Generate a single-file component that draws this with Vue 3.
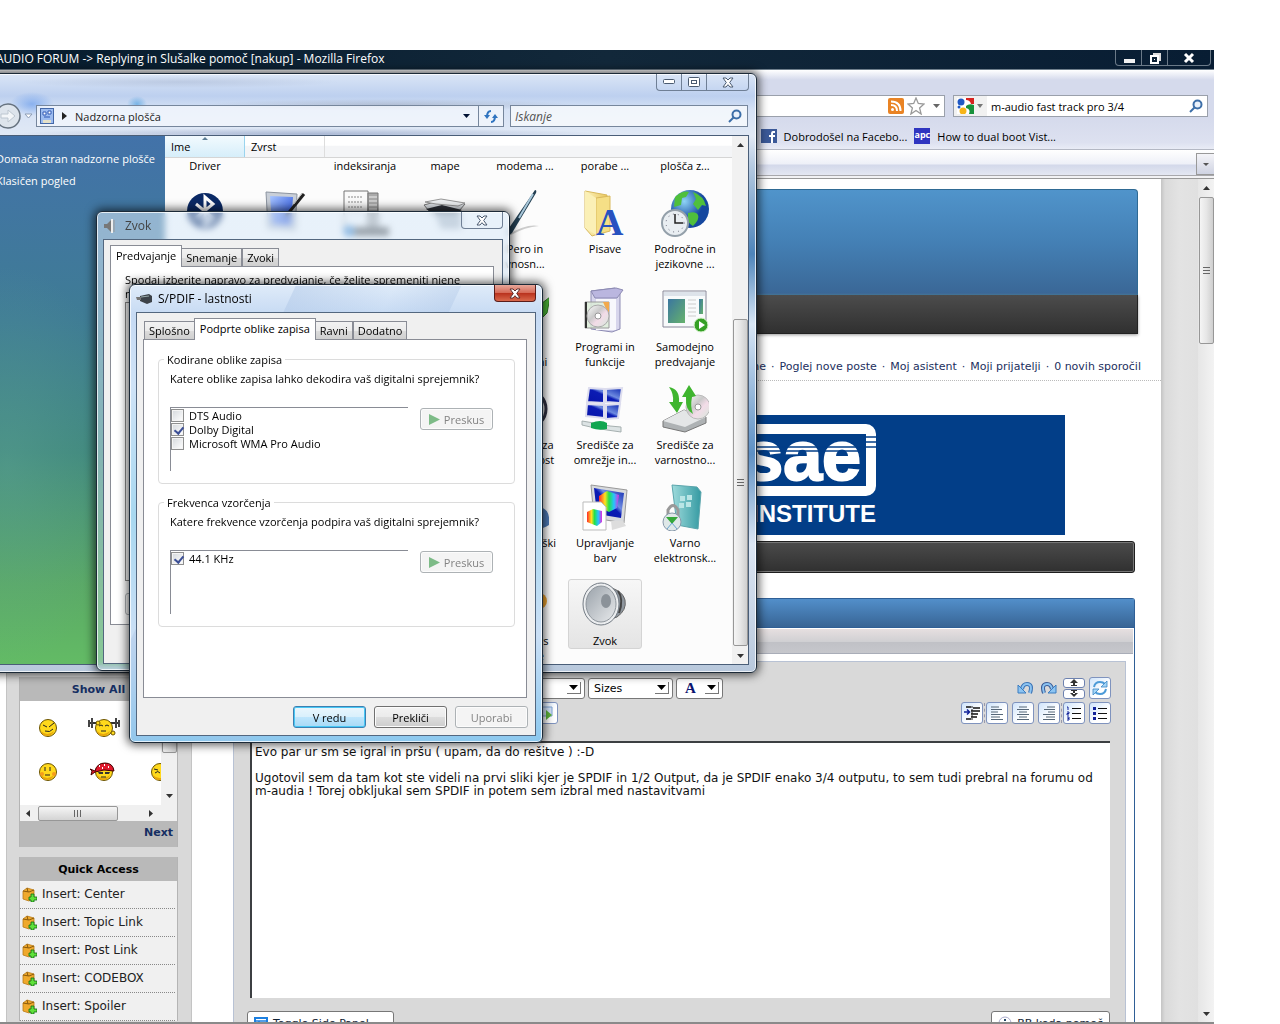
<script setup>
import { ref } from 'vue'

const searchText = ref('m-audio fast track pro 3/4')
const post = ref(`Evo par ur sm se igral in pršu ( upam, da do rešitve ) :-D

Ugotovil sem da tam kot ste videli na prvi sliki kjer je SPDIF in 1/2 Output, da je SPDIF enako 3/4 outputu, to sem tudi prebral na forumu od
m-audia ! Torej obkljukal sem SPDIF in potem sem izbral med nastavitvami`)

const formats = ref([
  { name: 'DTS Audio', on: false },
  { name: 'Dolby Digital', on: true },
  { name: 'Microsoft WMA Pro Audio', on: false }
])
const rates = ref([{ name: '44.1 KHz', on: true }])

const userLinks = ['Poglej nove poste', 'Moj asistent', 'Moji prijatelji', '0 novih sporočil']
const quick = ['Center', 'Topic Link', 'Post Link', 'CODEBOX', 'Spoiler']
const firstRow = ['Driver', '', 'indeksiranja', 'mape', 'modema ...', 'porabe ...', 'plošča z...']

// control panel icons, 48x48
const art = {
  bluetooth: '<circle cx="24" cy="22" r="18" fill="#0b2a66"/><path d="M15 15l17 14-8 7V8l8 7-17 14" fill="none" stroke="#fff" stroke-width="3"/>',
  tablet: '<path d="M5 3l31 2-2 36-27-2z" fill="#c9cfd8" stroke="#8c94a0"/><path d="M9 7l23 1-2 28-19-1z" fill="url(#gScreen)"/><path d="M43 5L25 27" stroke="#222" stroke-width="3"/><path d="M41 4L33 15" stroke="#bbb"/>',
  index: '<path d="M3 2h24v40H3z" fill="#fafafa" stroke="#777"/><path d="M27 4h10v36H27z" fill="#aaa" stroke="#777"/><path d="M7 8h15M7 13h15M7 18h15M7 23h15" stroke="#888" stroke-dasharray="2 1"/><path d="M28 8h8M28 12h8M28 16h8M28 20h8" stroke="#eee"/><path d="M4 38h46v9H4z" fill="#555"/><circle cx="8" cy="42" r="6" fill="#4b8fd0"/>',
  printer: '<path d="M3 16l18-5 23 4-6 7H8z" fill="#dfe3e8" stroke="#777"/><path d="M5 20l16-4 20 5-6 3H12z" fill="#2e3239"/><path d="M4 13l16-3 24 4-7 3-22-2z" fill="#f0f2f4" stroke="#999"/><path d="M14 24h26v16H20z" fill="#b5bdc6"/>',
  pen: '<path d="M6 46q20-12 32-9-14 1-28 9z" fill="#ccc"/><path d="M34 1q2 0 1 3L11 44l-4 3 1-8z" fill="#233f52"/><path d="M32 5L18 29" stroke="#a9c8da" stroke-width="2"/>',
  fonts: '<path d="M4 2l22 4v36L11 47 4 39z" fill="url(#gFolder)" stroke="#d9b95c"/><path d="M15 9l14-2v35l-14 4z" fill="#f5df86" stroke="#d9b95c"/><path d="M4 2l11 7v37L4 39z" fill="#fbf0b6"/><text x="15" y="46" font-family="Liberation Serif" font-weight="bold" font-size="38" fill="#2852c0">A</text>',
  region: '<circle cx="29" cy="20" r="19" fill="url(#gGlobe)"/><path d="M14 8q8-7 14-5l-3 5-4 1-1 7-7 2zM32 3q11 4 13 14l-4-1-4 5-5-6 3-5zM27 24q8-2 10 2t-5 11q-6-2-5-13z" fill="#4fbf3c"/><circle cx="14" cy="34" r="13" fill="#e9eef2" stroke="#94a0aa" stroke-width="2"/><circle cx="14" cy="34" r="9" fill="none" stroke="#667" stroke-dasharray="1 4"/><path d="M14 25v9h8" stroke="#222" stroke-width="1.500" fill="none"/>',
  programs: '<path d="M10 4l24-3 5 6v35l-8 3-21-3z" fill="#d7d5ec" stroke="#8d8bb3"/><path d="M10 4l4 7h22l6-8-7-2z" fill="#bab6df" stroke="#8d8bb3"/><path d="M15 12h20v31H15z" fill="#f7f7fc"/><path d="M4 15h24v26H4z" fill="#dcecd8" fill-opacity=".85" stroke="#999"/><path d="M22 15h6v14z" fill="#f2a94c"/><path d="M4 15h2v26H4z" fill="#333"/><circle cx="17" cy="29" r="11" fill="url(#gDisc)" stroke="#aaa"/><circle cx="17" cy="29" r="3" fill="#fff" stroke="#999"/>',
  autoplay: '<path d="M2 4h43v36H2z" fill="#f8fafb" stroke="#889"/><path d="M3 5h41v4H3z" fill="#dde3ea"/><path d="M7 12h17v24H7z" fill="url(#gTeal)"/><path d="M27 13h8M27 17h8M27 21h8M27 25h8M27 29h8" stroke="#ccc"/><path d="M38 12h4v15h-4z" fill="url(#gTeal)"/><circle cx="40" cy="38" r="7" fill="#35a025" stroke="#d9f3d0"/><path d="M38 34l6 4-6 4z" fill="#fff"/>',
  network: '<g stroke="#dde" stroke-width="2"><path d="M8 3l15 1v14l-17-1zM25 4l16-1-2 15-14-1z" fill="url(#gNight)"/><path d="M6 19l17 1v13l-18-2zM25 20l14-1-2 14-12 1z" fill="url(#gNight)"/></g><path d="M1 36l12 2 16 3 11 1v5l-14-2-12-2-13-3z" fill="#dce3e4" stroke="#a6b0b0"/><path d="M10 38q10-4 16 0v6q-8 2-16-1z" fill="#12a650"/>',
  backup: '<path d="M2 36l21-11 22 7v6L24 47 2 42z" fill="#aeb2b4" stroke="#777"/><path d="M2 36l21-11 22 7-21 10z" fill="#e4e6e7"/><circle cx="37" cy="22" r="12" fill="url(#gDisc)" stroke="#bbb"/><circle cx="37" cy="22" r="3" fill="#fff" stroke="#999"/><path d="M8 2q11 2 10 15h4l-6 11-8-11h4Q13 9 8 2z" fill="#3fb52f"/><path d="M21 12L28 0l7 11-4 1q-2 10 1 17-8-4-7-17z" fill="#3fb52f"/>',
  color: '<path d="M10 2l36 5-3 33-30-5z" fill="#d8dadd" stroke="#999"/><path d="M13 5l30 5-3 25-24-4z" fill="url(#gNight)"/><path d="M18 13l8-5 12 4-2 13-8 4-10-5z" fill="url(#gRainbow)"/><path d="M30 38h12l3 5-14 4z" fill="#ddd"/><path d="M2 19h18l5 5v23H2z" fill="#fff" stroke="#bbb"/><path d="M6 29l6-3 9 2v11l-5 4-10-4z" fill="url(#gRainbow)"/>',
  cardspace: '<path d="M11 2l25 2 4 5-3 37-21-4z" fill="url(#gTeal2)" stroke="#5ba5ac"/><path d="M19 13h5v5h-5zM26 12h5v5h-5zM18 20h5v5h-5zM25 19h5v5h-5z" fill="#b9e5e5"/><path d="M7 34V27q5-9 10 0v7" fill="none" stroke="#999" stroke-width="3"/><circle cx="11" cy="39" r="9" fill="#dfe8e8" stroke="#89a"/><path d="M5 34h12l-6 7z" fill="#35a83a"/><path d="M11 40l5 6M11 40l-5 6" stroke="#6aa5d0"/>',
  sound: '<path d="M24 5q18 4 20 14t-8 17L18 42z" fill="#8e969e" stroke="#666"/><path d="M37 10q6 8 1 22" stroke="#444" stroke-width="2" fill="none"/><ellipse cx="20" cy="23" rx="18" ry="21" fill="#eceef0" stroke="#737b84"/><ellipse cx="20" cy="23" rx="15" ry="18" fill="url(#gCone)" stroke="#8d949b"/><ellipse cx="25" cy="20" rx="5" ry="7" fill="#8b9299"/>',
  arrow: '<path d="M28 8l8 12 13-10-3 16-12 12z" fill="#4cb838" stroke="#2a7a1d"/>',
  clock: '<circle cx="26" cy="24" r="19" fill="#eee" stroke="#334" stroke-width="3"/>',
  user: '<path d="M20 44q2-20 16-20t12 18q-8 6-24 2z" fill="#4d7ab5"/>',
  orange: '<circle cx="38" cy="20" r="8" fill="#f0a530"/>'
}

const none = { icon: '', label: [] }
const rows = [
  [{ icon: 'bluetooth', label: [] }, { icon: 'tablet', label: [] }, { icon: 'index', label: [] }, { icon: 'printer', label: [] },
    { icon: 'pen', label: ['Pero in', 'vnosn...'] }, { icon: 'fonts', label: ['Pisave'] }, { icon: 'region', label: ['Področne in', 'jezikovne ...'] }],
  [none, none, none, none,
    { icon: 'arrow', label: ['Težave', 'in računi'] }, { icon: 'programs', label: ['Programi in', 'funkcije'] }, { icon: 'autoplay', label: ['Samodejno', 'predvajanje'] }],
  [none, none, none, none,
    { icon: 'clock', label: ['Središče za', 'dostopnost'] }, { icon: 'network', label: ['Središče za', 'omrežje in...'] }, { icon: 'backup', label: ['Središče za', 'varnostno...'] }],
  [none, none, none, none,
    { icon: 'user', label: ['Uporabniški', 'računi'] }, { icon: 'color', label: ['Upravljanje', 'barv'] }, { icon: 'cardspace', label: ['Varno', 'elektronsk...'] }],
  [none, none, none, none,
    { icon: 'orange', label: ['Windows', 'Update'] }, { icon: 'sound', label: ['Zvok'], picked: true }, none]
]

// smileys in the side panel, 34x24
const face = '<circle cx="17" cy="12" r="8.500" fill="#ffd91c" stroke="#6b5300"/><path d="M10 15q6 6 13 0-2 5-7 5t-6-5z" fill="#e8a70c"/>'
const smileys = [
  face + '<path d="M12 9l4 2M23 7l-5 4M14 15q5 2 8-2" stroke="#222" fill="none"/>',
  '<path d="M1 7h32" stroke="#333" stroke-width="2"/><path d="M2 4v7M5 2v10M29 2v10M32 4v7" stroke="#444" stroke-width="2"/>' + face + '<path d="M12 10l2-1 2 1M18 10l2-1 2 1M14 15h5" stroke="#222" fill="none"/><circle cx="11" cy="7" r="2" fill="#ffd91c" stroke="#6b5300"/><circle cx="26" cy="17" r="2" fill="#ffd91c" stroke="#6b5300"/>',
  '',
  face + '<path d="M14 7v4M19 7v4M14 15h5" stroke="#222"/><circle cx="11" cy="14" r="2" fill="#f59b1c"/><circle cx="23" cy="14" r="2" fill="#f59b1c"/>',
  face + '<path d="M8 11q2-8 10-8t9 8l-10-1-9 2-4 3 1-4-2-2z" fill="#e0182c" stroke="#400"/><path d="M12 6h1M17 5h1M21 7h1M15 8h1" stroke="#fff" stroke-width="2"/><path d="M11 12h5v2h-4zM18 12h5l-1 2h-4z" fill="#333"/><path d="M14 17h5" stroke="#222"/>',
  face + '<path d="M11 9l4 1M12 13q3-3 5 0" stroke="#222" fill="none"/>'
]

const alignIcons = [
  '<path d="M3 3h8M3 5.500h11M3 8h7M3 10.500h12M3 13h9M3 15.500h12" stroke="#567"/>',
  '<path d="M5 3h8M3 5.500h12M5 8h8M3 10.500h12M5 13h8M3 15.500h12" stroke="#567"/>',
  '<path d="M7 3h8M4 5.500h11M8 8h7M3 10.500h12M6 13h9M3 15.500h12" stroke="#567"/>'
]
</script>

<template>
  <div class="desktop">
    <svg class="defs" width="0" height="0" aria-hidden="true">
      <defs>
        <linearGradient id="gScreen" x1="0" y1="0" x2="1" y2="1"><stop offset="0" stop-color="#a9c6ff" /><stop offset="1" stop-color="#1a45d8" /></linearGradient>
        <linearGradient id="gFolder"><stop offset="0" stop-color="#fdf3bd" /><stop offset="1" stop-color="#e9c85f" /></linearGradient>
        <radialGradient id="gGlobe" cx=".35" cy=".3"><stop offset="0" stop-color="#8fd4f7" /><stop offset="1" stop-color="#15489f" /></radialGradient>
        <linearGradient id="gDisc" x1="0" y1="0" x2="1" y2="1"><stop offset="0" stop-color="#fff" /><stop offset=".4" stop-color="#c9c9c9" /><stop offset=".6" stop-color="#f3dce8" /><stop offset="1" stop-color="#d6e8dc" /></linearGradient>
        <linearGradient id="gTeal" x1="0" y1="0" x2="1" y2="1"><stop offset="0" stop-color="#3a76a0" /><stop offset="1" stop-color="#66b26c" /></linearGradient>
        <linearGradient id="gTeal2"><stop offset="0" stop-color="#9edbdc" /><stop offset="1" stop-color="#359aa2" /></linearGradient>
        <linearGradient id="gNight" x1="0" y1="1" x2="1" y2="0"><stop offset="0" stop-color="#0713a8" /><stop offset=".5" stop-color="#0b1cb4" /><stop offset=".6" stop-color="#6e8be0" /><stop offset="1" stop-color="#0d27b0" /></linearGradient>
        <linearGradient id="gRainbow"><stop offset="0" stop-color="#ff2a2a" /><stop offset=".3" stop-color="#ffe21f" /><stop offset=".5" stop-color="#23e04b" /><stop offset=".75" stop-color="#27c4ff" /><stop offset="1" stop-color="#e22be0" /></linearGradient>
        <linearGradient id="gCone" x1="0" y1="0" x2="1" y2="1"><stop offset="0" stop-color="#9aa2aa" /><stop offset="1" stop-color="#e8eaec" /></linearGradient>
      </defs>
    </svg>

    <main class="browser">
      <header class="titlebar">
        <span class="title">AUDIO FORUM -&gt; Replying in Slušalke pomoč [nakup] - Mozilla Firefox</span>
        <div class="dark-caps">
          <button aria-label="Minimize"><svg width="12" height="12"><path d="M1 7h11v4H1z" fill="#f2f2f2" /></svg></button>
          <button aria-label="Restore"><svg width="12" height="12"><path d="M4 2h7v7" fill="none" stroke="#ddd" stroke-width="2" /><path d="M2 4h7v7H2z" fill="#0b2034" stroke="#fff" stroke-width="2" /><path d="M5 7h1v1H5z" fill="#fff" /></svg></button>
          <button class="wide" aria-label="Close"><svg width="12" height="12"><path d="M2 2l8 8M10 2l-8 8" stroke="#fff" stroke-width="3" /></svg></button>
        </div>
      </header>

      <div class="chrome">
        <div class="urlbar">
          <svg width="16" height="16" viewBox="0 0 16 16"><rect width="16" height="16" rx="2" fill="#e98324" /><circle cx="4.500" cy="11.500" r="1.500" fill="#fff" /><path d="M3 7q6 0 6 6M3 3.500q9.500 0 9.500 9.500" fill="none" stroke="#fff" stroke-width="2" /></svg>
          <svg width="18" height="18" viewBox="0 0 18 18"><path d="M9 1l2.300 5.500 5.700.5-4.400 4 1.500 6L9 13.500 3.900 17l1.500-6L1 7l5.700-.5z" fill="#fff" stroke="#999" stroke-width="1.300" /></svg>
          <svg width="7" height="4"><path d="M0 0h7L3.500 4z" fill="#666" /></svg>
        </div>
        <div class="searchbar">
          <button class="engine" aria-label="Search engine">
            <svg width="17" height="16" viewBox="0 0 17 16"><rect width="17" height="16" fill="#fff" /><path d="M9 0h8v6h-3q-1-4-5-4z" fill="#d8221f" /><circle cx="4" cy="4" r="3.500" fill="#1f58c4" /><circle cx="2" cy="9" r="1.500" fill="#1f58c4" /><circle cx="6" cy="13" r="3.500" fill="#f6b418" /><path d="M9 8q3-3 8-1v9h-5q2-5-3-6z" fill="#17913a" /></svg>
            <svg width="6" height="4"><path d="M0 0h6L3 4z" fill="#777" /></svg>
          </button>
          <input v-model="searchText" type="text" aria-label="Search" />
          <svg width="14" height="14" viewBox="0 0 14 14"><circle cx="8.500" cy="5.500" r="4" fill="#e9f1fb" stroke="#3c6ea8" stroke-width="2" /><path d="M6 8l-5 5" stroke="#3c6ea8" stroke-width="2" /></svg>
        </div>
      </div>

      <nav class="bookmarks">
        <a href="#">
          <svg width="16" height="14" viewBox="0 0 16 14"><rect width="16" height="14" fill="#3b5998" /><path d="M14 3h-2q-1 0-1 2v9M8 7h6" fill="none" stroke="#fff" stroke-width="2" /></svg>
          Dobrodošel na Facebo...
        </a>
        <a href="#"><span class="apc">apc</span>How to dual boot Vist...</a>
      </nav>
      <div class="tabstrip"><button aria-label="All tabs"><svg width="6" height="3"><path d="M0 0h6L3 3z" fill="#555" /></svg></button></div>

      <div class="viewport">
        <div class="page">
          <div class="hero"></div>
          <div class="hero-nav"></div>
          <div class="user-links">
            <a href="#">Nove teme</a>
            <template v-for="l in userLinks" :key="l"><span>·</span><a href="#">{{ l }}</a></template>
          </div>
          <div class="banner">
            <svg width="728" height="120" viewBox="0 0 728 120" role="img" aria-label="SAE Institute">
              <rect width="728" height="120" fill="#023e88" />
              <rect x="360" y="14" width="174" height="62" rx="5" fill="none" stroke="#fff" stroke-width="10" />
              <text x="524" y="65" text-anchor="end" font-family="Liberation Sans" font-weight="bold" font-size="70" fill="#fff" stroke="#fff" stroke-width="2">sae</text>
              <path d="M380 32h145M380 36h145M528 22h12M528 27h12M528 32h12" stroke="#023e88" stroke-width="1.500" />
              <text x="539" y="107" text-anchor="end" font-family="Liberation Sans" font-weight="bold" font-size="24" fill="#fff">INSTITUTE</text>
            </svg>
          </div>
          <div class="crumbs"></div>

          <section class="panel">
            <div class="panel-title"></div>
            <div class="panel-sub"></div>
            <div class="panel-body">
              <aside class="side">
                <div class="box">
                  <a class="box-head" href="#">Show All</a>
                  <div class="smile-wrap">
                    <div class="smiles">
                      <svg v-for="(s, i) in smileys" :key="i" width="34" height="24" viewBox="0 0 34 24" v-html="s"></svg>
                      <svg class="stray" width="24" height="8"><path d="M1 8V5h22" fill="none" stroke="#111" /><path d="M17 2h5v4h-5z" fill="#8a6a5a" stroke="#222" /></svg>
                    </div>
                    <div class="vbar"><div class="thumb"></div><svg width="7" height="4"><path d="M0 0h7L3.500 4z" fill="#333" /></svg></div>
                  </div>
                  <div class="hbar">
                    <svg width="4" height="7"><path d="M4 0v7L0 3.500z" fill="#333" /></svg>
                    <div class="thumb"><i></i></div>
                    <svg width="4" height="7"><path d="M0 0v7l4-3.500z" fill="#333" /></svg>
                  </div>
                  <a class="box-foot" href="#">Next</a>
                </div>
                <div class="box">
                  <div class="box-head black">Quick Access</div>
                  <ul>
                    <li v-for="q in quick" :key="q">
                      <svg width="15" height="15" viewBox="0 0 15 15"><path d="M1 4l4-3 7 2v8l-5 3-6-2z" fill="#efa92c" stroke="#b97a15" stroke-width=".8" /><path d="M1 4l6 1 5-2M5 1l1 4" stroke="#8a5a0c" fill="none" /><path d="M9 7h3v3h3v3h-3v2H9v-2H7v-3h2z" fill="#5fe03a" stroke="#0d6a12" stroke-width=".8" /></svg>
                      <a href="#">Insert: {{ q }}</a>
                    </li>
                  </ul>
                </div>
              </aside>

              <div class="editor">
                <div class="tools">
                  <button class="drop fonts">Fonts<span class="tri"><svg width="9" height="5"><path d="M0 0h9L4.500 5z" /></svg></span></button>
                  <button class="drop sizes">Sizes<span class="tri"><svg width="9" height="5"><path d="M0 0h9L4.500 5z" /></svg></span></button>
                  <button class="drop ink"><b>A</b><span class="tri"><svg width="9" height="5"><path d="M0 0h9L4.500 5z" /></svg></span></button>
                  <div class="right">
                    <button class="plain" aria-label="Undo"><svg width="16" height="14" viewBox="0 0 16 14"><path d="M13 12q3-9-3-9-4 0-5 5" fill="none" stroke="#3a72b4" stroke-width="4" /><path d="M13 12q3-9-3-9-4 0-5 5" fill="none" stroke="#8cc4f2" stroke-width="2" /><path d="M1 4v8h8z" fill="#8cc4f2" stroke="#3a7cc0" /></svg></button>
                    <button class="plain" aria-label="Redo"><svg width="16" height="14" viewBox="0 0 16 14"><path d="M3 12Q0 3 6 3q4 0 5 5" fill="none" stroke="#3a5a94" stroke-width="4" /><path d="M3 12Q0 3 6 3q4 0 5 5" fill="none" stroke="#8cc4f2" stroke-width="2" /><path d="M15 4v8H7z" fill="#8cc4f2" stroke="#3a7cc0" /></svg></button>
                    <div class="stack">
                      <button aria-label="Smaller"><svg width="8" height="7"><path d="M0 4l4-4 4 4zM1 6h6v1H1zM3 3h2v4H3z" fill="#333" /></svg></button>
                      <button aria-label="Larger"><svg width="8" height="7"><path d="M0 3l4 4 4-4zM1 0h6v1H1zM3 0h2v4H3z" fill="#333" /></svg></button>
                    </div>
                    <button class="sq" aria-label="Switch editor"><svg width="18" height="18" viewBox="0 0 18 18"><path d="M3 8q1-5 6-5 3 0 5 2M15 10q-1 5-6 5-3 0-5-2" fill="none" stroke="#4c9bd8" stroke-width="2" /><path d="M16 2v6h-6zM2 16v-6h6z" fill="#a5d6f7" stroke="#3b86c4" stroke-width=".8" /></svg></button>
                  </div>
                </div>
                <div class="tools">
                  <button class="sq media" aria-label="Insert media"><svg width="18" height="18" viewBox="0 0 18 18"><path d="M3 3h11v9H3z" fill="#d5e6fb" stroke="#7fa4d6" /><path d="M8 6l6 5-6 5z" fill="#5fb63b" /></svg></button>
                  <div class="right">
                    <button class="sq" aria-label="Indent"><svg width="18" height="18" viewBox="0 0 18 18"><path d="M9 2v14" stroke="#222" stroke-dasharray="2 1" /><path d="M3 3h5M10 4h7M3 15h5M8 7h9M8 10h7M8 13h6" stroke="#111" stroke-width="1.500" /><path d="M1 8h5M4 5.500l2.500 2.500L4 10.500" stroke="#129" stroke-width="1.500" fill="none" /></svg></button>
                    <span class="dash"></span>
                    <button v-for="(a, i) in alignIcons" :key="i" class="sq" aria-label="Align"><svg width="18" height="18" viewBox="0 0 18 18" v-html="a"></svg></button>
                    <span class="dash"></span>
                    <button class="sq" aria-label="Numbered list"><svg width="18" height="18" viewBox="0 0 18 18"><path d="M7 4.500h9M7 9.500h9M7 14.500h9" stroke="#111" /><path d="M2 3h1v3M2 8h2v1.500H2V11h2M2 13h2v3H2M2.500 14.500H4" stroke="#129" fill="none" /></svg></button>
                    <button class="sq" aria-label="Bullet list"><svg width="18" height="18" viewBox="0 0 18 18"><path d="M7 4.500h9M7 9.500h9M7 14.500h9" stroke="#111" /><path d="M2 3h3v3H2zM2 8h3v3H2zM2 13h3v3H2z" fill="#129" /></svg></button>
                  </div>
                </div>
                <textarea v-model="post" aria-label="Post" spellcheck="false"></textarea>
                <div class="under">
                  <button><svg width="14" height="13" viewBox="0 0 14 13"><rect x="1" y="1" width="12" height="11" fill="#fff" stroke="#1c7fe0" stroke-width="2" /><path d="M1 4h12M5 4v8" stroke="#1c7fe0" stroke-width="1.500" /></svg>Toggle Side Panel</button>
                  <button><svg width="14" height="14" viewBox="0 0 14 14"><circle cx="7" cy="7" r="6" fill="#fff" stroke="#aac" /><path d="M7 6v5M7 3v2" stroke="#246" stroke-width="2" /></svg>BB koda pomoč</button>
                </div>
              </div>
            </div>
          </section>
        </div>
        <div class="gutter"></div>
        <div class="pagebar">
          <svg width="7" height="4"><path d="M0 4h7L3.500 0z" fill="#333" /></svg>
          <div class="thumb"><i></i></div>
          <svg class="down" width="7" height="4"><path d="M0 0h7L3.500 4z" fill="#333" /></svg>
        </div>
      </div>
    </main>

    <section class="win explorer">
      <div class="caps">
        <button aria-label="Minimize"><svg width="13" height="6"><rect x=".5" y=".5" width="11" height="4" rx="1" fill="#fff" stroke="#4a5a70" /></svg></button>
        <button aria-label="Maximize"><svg width="12" height="10"><rect x=".5" y=".5" width="11" height="9" rx="1" fill="#fff" stroke="#4a5a70" /><rect x="3.500" y="3.500" width="5" height="3" fill="none" stroke="#4a5a70" /></svg></button>
        <button class="wide" aria-label="Close"><svg width="12" height="11" viewBox="0 0 12 11"><path d="M1 1h3l2 2 2-2h3L7.700 5.500 11 10H8L6 7.700 4 10H1l3.300-4.500z" fill="#fff" stroke="#4a5a70" /></svg></button>
      </div>
      <div class="addr-row">
        <button class="fwd" aria-label="Forward"><svg width="26" height="26" viewBox="0 0 26 26"><circle cx="13" cy="13" r="12" fill="#dde4ec" stroke="#66727f" stroke-width="1.500" /><path d="M6 11h7V7l7 6-7 6v-4H6z" fill="#f3f6f9" stroke="#bcc6d0" /></svg></button>
        <svg width="9" height="6"><path d="M1 1h7L4.500 5z" fill="#fff" stroke="#8d9db5" /></svg>
        <div class="addr">
          <svg width="14" height="16" viewBox="0 0 14 16"><rect x=".5" y=".5" width="13" height="15" fill="#9dbcf0" stroke="#4468a8" /><path d="M3 4h3v3H3zM8 3h3v3H8zM4 9h6" fill="#fff" stroke="#2f58b4" /><path d="M3 12h8v3H3z" fill="#e4e0c8" /></svg>
          <svg width="5" height="8"><path d="M0 0v8l5-4z" fill="#222" /></svg>
          <span>Nadzorna plošča</span>
          <svg class="end" width="7" height="4"><path d="M0 0h7L3.500 4z" fill="#013" /></svg>
          <button class="refresh" aria-label="Refresh"><svg width="14" height="13" viewBox="0 0 14 13"><path d="M7 1Q3 1 3 7M7 12q4 0 4-6" stroke="#2f74c0" stroke-width="2" fill="none" /><path d="M0 5h6L3 9zM8 8h6l-3-4z" fill="#2f74c0" /></svg></button>
        </div>
        <div class="find">
          <input type="text" placeholder="Iskanje" aria-label="Iskanje" />
          <svg width="14" height="14" viewBox="0 0 14 14"><circle cx="8.500" cy="5.500" r="4" fill="#e9f1fb" stroke="#3c6ea8" stroke-width="2" /><path d="M6 8l-5 5" stroke="#3c6ea8" stroke-width="2" /></svg>
        </div>
      </div>
      <div class="ex-client">
        <nav class="tasks">
          <a href="#">Domača stran nadzorne plošče</a>
          <a href="#">Klasičen pogled</a>
        </nav>
        <div class="listing">
          <div class="cols"><button class="sorted">Ime<svg width="6" height="3"><path d="M0 3h6L3 0z" fill="#5c7d95" /></svg></button><button>Zvrst</button></div>
          <div class="row first"><div v-for="(f, i) in firstRow" :key="i" class="cell">{{ f }}</div></div>
          <div v-for="(r, i) in rows" :key="i" class="row">
            <div v-for="(c, j) in r" :key="j" class="cell">
              <div class="item" :class="{ picked: c.picked }">
                <svg width="48" height="48" viewBox="0 0 48 48" v-html="art[c.icon] || ''"></svg>
                <span v-for="t in c.label" :key="t">{{ t }}</span>
              </div>
            </div>
          </div>
        </div>
        <div class="ex-bar">
          <svg width="7" height="4"><path d="M0 4h7L3.500 0z" fill="#333" /></svg>
          <div class="thumb"><i></i></div>
          <svg width="7" height="4"><path d="M0 0h7L3.500 4z" fill="#333" /></svg>
        </div>
      </div>
    </section>

    <section class="win dialog zvok">
      <header>
        <svg width="16" height="16" viewBox="0 0 16 16"><path d="M1 6h3l5-5v14L4 10H1z" fill="#777" /><path d="M9 1v14" stroke="#eee" stroke-width="2" /><path d="M11 2v12" stroke="#999" /></svg>
        <h2>Zvok</h2>
        <button class="close" aria-label="Close"><svg width="12" height="11" viewBox="0 0 12 11"><path d="M1 1h3l2 2 2-2h3L7.700 5.500 11 10H8L6 7.700 4 10H1l3.300-4.500z" fill="#fff" stroke="#4a5a70" /></svg></button>
      </header>
      <div class="client">
        <div class="tabs"><button class="on">Predvajanje</button><button>Snemanje</button><button>Zvoki</button></div>
        <div class="sheet">
          <p>Spodaj izberite napravo za predvajanje, če želite spremeniti njene<br />nastavitve:</p>
          <div class="devices"></div>
          <button class="btn" disabled aria-label="Configure"></button>
        </div>
      </div>
    </section>

    <section class="win dialog spdif">
      <header>
        <svg width="16" height="12" viewBox="0 0 16 12"><path d="M4 3l9-2 3 2v6l-5 2-7-3z" fill="#3c4248" /><path d="M0 4h5v3H1z" fill="#777" /><path d="M5 4l8-1" stroke="#9aa" /></svg>
        <h2>S/PDIF - lastnosti</h2>
        <button class="close red" aria-label="Close"><svg width="12" height="11" viewBox="0 0 12 11"><path d="M1 1h3l2 2 2-2h3L7.700 5.500 11 10H8L6 7.700 4 10H1l3.300-4.500z" fill="#fff" stroke="#5c3030" /></svg></button>
      </header>
      <div class="client">
        <div class="tabs"><button>Splošno</button><button class="on">Podprte oblike zapisa</button><button>Ravni</button><button>Dodatno</button></div>
        <div class="sheet">
          <fieldset>
            <legend>Kodirane oblike zapisa</legend>
            <p>Katere oblike zapisa lahko dekodira vaš digitalni sprejemnik?</p>
            <div class="pick">
              <div class="list"><label v-for="f in formats" :key="f.name"><input v-model="f.on" type="checkbox" />{{ f.name }}</label></div>
              <button class="btn" disabled><svg width="11" height="11"><path d="M0 0v11l11-5.500z" fill="#7dbb87" /></svg>Preskus</button>
            </div>
          </fieldset>
          <fieldset>
            <legend>Frekvenca vzorčenja</legend>
            <p>Katere frekvence vzorčenja podpira vaš digitalni sprejemnik?</p>
            <div class="pick">
              <div class="list"><label v-for="f in rates" :key="f.name"><input v-model="f.on" type="checkbox" />{{ f.name }}</label></div>
              <button class="btn" disabled><svg width="11" height="11"><path d="M0 0v11l11-5.500z" fill="#7dbb87" /></svg>Preskus</button>
            </div>
          </fieldset>
        </div>
        <footer><button class="btn default">V redu</button><button class="btn">Prekliči</button><button class="btn" disabled>Uporabi</button></footer>
      </div>
    </section>
  </div>
</template>

<style>
body { margin: 0; background: #fff; }
</style>

<style scoped>
* { box-sizing: border-box; }
button, input, textarea { font: inherit; color: inherit; margin: 0; padding: 0; border: 0; background: none; }
a { color: inherit; text-decoration: none; }
svg { flex: none; display: block; }
.desktop { position: relative; min-height: 100vh; padding: 50px 66px 0 0; overflow: hidden; font: 11px/15px "Open Sans", "Noto Sans", sans-serif; color: #000; }
.defs { position: absolute; }
.thumb { display: flex; align-items: center; justify-content: center; border: 1px solid #979797; border-radius: 2px; background: linear-gradient(90deg, #f5f5f5, #e6e6e6 50%, #cfcfcf); }
.thumb i { width: 7px; height: 8px; background: repeating-linear-gradient(#666 0 1px, transparent 1px 3px); }

/* firefox */
.browser { display: flex; flex-direction: column; height: calc(100vh - 50px); border-bottom: 2px solid #8a8a8a; }
.titlebar { display: flex; justify-content: space-between; height: 20px; background: linear-gradient(90deg, #071c2e, #12283a 50%, #081d33); border-bottom: 1px solid #6f7f8c; color: #fff; }
.title { font-size: 12px; line-height: 18px; white-space: nowrap; margin-left: -4px; }
.dark-caps { display: flex; height: 16px; margin-right: 3px; border: 1px solid #6b7a88; border-top: 0; border-radius: 0 0 4px 4px; }
.dark-caps button { width: 26px; display: flex; justify-content: center; align-items: center; border-right: 1px solid #6b7a88; }
.dark-caps .wide { width: 42px; border: 0; }
.chrome { display: flex; align-items: flex-end; gap: 8px; height: 47px; padding: 0 6px 0 0; background: linear-gradient(#fff, #d5daec 10px); }
.urlbar { flex: 1; display: flex; justify-content: flex-end; align-items: center; gap: 3px; height: 22px; padding-right: 4px; background: #fff; border: 1px solid #9aa0ab; }
.urlbar svg:last-child { margin-left: 5px; }
.searchbar { display: flex; align-items: center; width: 255px; height: 22px; padding-right: 4px; background: #fff; border: 1px solid #9aa0ab; }
.engine { display: flex; align-items: center; gap: 3px; height: 20px; padding: 0 4px 0 3px; background: #f1f1f1; }
.searchbar input { flex: 1; min-width: 0; padding-left: 4px; outline: 0; }
.bookmarks { display: flex; justify-content: flex-end; gap: 7px; height: 33px; padding: 0 158px 0 0; background: linear-gradient(#d5daec, #dde1f0 80%, #e9ecf6); border-bottom: 1px solid #b4b8c4; }
.bookmarks a { display: flex; align-items: center; gap: 7px; height: 38px; }
.apc { width: 16px; height: 16px; line-height: 14px; background: #2f35c0; color: #fff; font-size: 9px; font-weight: bold; text-align: center; }
.tabstrip { display: flex; justify-content: flex-end; align-items: flex-end; height: 29px; padding-bottom: 3px; background: linear-gradient(#fff, #eef0f8 14px, #d3d8ea 15px, #e4e7f2 25px, #a8a8ac 25px, #a8a8ac 26px, #f2f2f4 26px); border-bottom: 1px solid #999; }
.tabstrip button { width: 18px; height: 22px; display: flex; align-items: center; justify-content: center; background: linear-gradient(#f4f4f8, #cfd3e2); border: 1px solid #999; border-right: 0; }
.viewport { flex: 1; min-height: 0; display: flex; overflow: hidden; }
.page { flex: 1; min-width: 0; padding-top: 10px; background: #fff; font: 11px/13px "DejaVu Sans", sans-serif; }
.gutter { width: 37px; background: linear-gradient(90deg, #c4c4c4, #dadada 4px, #e3e3e3 50%, #e0e0e0); }
.pagebar { display: flex; flex-direction: column; align-items: center; width: 16px; padding: 7px 0 6px; background: linear-gradient(90deg, #e6e6e6, #f3f3f3); }
.pagebar .thumb { width: 15px; height: 147px; margin-top: 7px; }
.pagebar .down { margin-top: auto; }

/* forum */
.hero { height: 106px; margin-right: 23px; border: 1px solid #2f6a94; border-left: 0; border-radius: 0 4px 0 0; background: linear-gradient(#5094cb, #4480b5 50%, #3a6796); }
.hero-nav { height: 39px; margin-right: 23px; border-right: 1px solid #222; border-bottom: 1px solid #222; background: linear-gradient(#4c4c4c, #303030); box-shadow: 0 1px 3px #999; }
.user-links { display: flex; justify-content: flex-end; gap: 5px; height: 47px; padding: 26px 20px 0 0; color: #1c2f5e; border-bottom: 1px dotted #bbb; white-space: nowrap; }
.banner { display: flex; justify-content: flex-end; margin: 34px 96px 6px 0; }
.crumbs { height: 32px; margin: 0 26px 25px 0; border: 1px solid #1e1e1e; border-radius: 3px; background: linear-gradient(#4b4b4b, #303030); box-shadow: inset 0 0 0 1px #777; }
.panel { margin-right: 26px; border: 1px solid #2f5f96; border-left: 0; border-radius: 0 3px 0 0; }
.panel-title { height: 29px; background: linear-gradient(#528fca, #386595); border-bottom: 1px solid #2f5f96; }
.panel-sub { height: 26px; margin-right: 1px; border-top: 1px solid #fff; border-bottom: 1px solid #a9adb8; background: linear-gradient(#e6dfe0, #cfcfd2 55%, #c0c1c6 56%, #c6c7cc); }
.panel-body { display: flex; gap: 41px; padding: 7px 8px 0 6px; }
.side { width: 186px; padding: 15px 13px 0 12px; background: #d9d9d9; border: 1px solid #c4c4c4; display: flex; flex-direction: column; gap: 10px; }
.box { border: solid #b4b4b4; border-width: 0 1px; }
.box-head { display: block; height: 24px; line-height: 26px; text-align: center; font-weight: bold; background: #b9b9b9; color: #152e62; }
.box-head.black { color: #000; }
.box-foot { display: block; height: 26px; line-height: 24px; padding-right: 4px; text-align: right; font-weight: bold; background: #b9b9b9; color: #152e62; }
.smile-wrap { display: flex; height: 104px; background: #fff; }
.smiles { flex: 1; display: grid; grid-template-columns: repeat(3, 56px); grid-auto-rows: 44px; padding-top: 15px; overflow: hidden; }
.smiles svg { justify-self: center; }
.smiles .stray { grid-column: 3; justify-self: start; }
.vbar { display: flex; flex-direction: column; justify-content: space-between; align-items: center; width: 16px; padding-bottom: 7px; background: #f0f0f0; }
.vbar .thumb { width: 15px; height: 52px; }
.hbar { display: flex; align-items: center; height: 16px; padding: 0 24px 0 6px; background: #f0f0f0; }
.hbar .thumb { width: 80px; height: 15px; margin: 0 auto 0 8px; background: linear-gradient(#f5f5f5, #d4d4d4); }
.hbar .thumb i { height: 7px; width: 8px; background: repeating-linear-gradient(90deg, #666 0 1px, transparent 1px 3px); }
ul { list-style: none; margin: 0; padding: 0; background: #f0f0f0; }
li { display: flex; align-items: center; gap: 5px; height: 28px; padding-left: 2px; margin-right: 2px; border-bottom: 1px dotted #888; color: #222; font-size: 12px; }
.editor { flex: 1; min-width: 0; padding: 15px 15px 0 16px; background: #d9d9d9; border: 1px solid #b8c2d4; }
.tools { display: flex; align-items: center; gap: 3px; height: 22px; margin-bottom: 3px; }
.drop { display: flex; align-items: center; justify-content: space-between; height: 21px; padding: 0 3px 0 5px; background: #fff; border: 1px solid #777; border-radius: 3px; }
.drop b { font: bold 15px/18px "Liberation Serif", serif; color: #0a1470; padding-left: 3px; }
.tri { display: flex; align-items: center; justify-content: center; width: 14px; height: 12px; border-right: 1px solid #777; border-bottom: 1px solid #777; }
.fonts { width: 335px; }
.sizes { width: 85px; }
.ink { width: 47px; }
.right { display: flex; align-items: center; gap: 4px; margin: 0 -1px 0 auto; }
.right .plain { width: 20px; display: flex; justify-content: center; }
.right .dash { width: 1px; height: 20px; margin: 0 -3px; border-left: 1px dashed #99a; }
.sq { display: flex; align-items: center; justify-content: center; width: 22px; height: 22px; border: 1px solid #7f93be; border-radius: 3px; background: linear-gradient(135deg, #cfe4fb, #fff 60%); }
.media { margin-left: 286px; }
.stack { display: flex; flex-direction: column; gap: 1px; }
.stack button { display: flex; align-items: center; justify-content: center; width: 22px; height: 10px; border: 1px solid #6d82b0; border-radius: 3px; background: #fff; }
textarea { display: block; width: 100%; height: 257px; margin: 17px 0 13px; padding: 3px 3px; border: solid #3c3f42; border-width: 2px 0 0 2px; background: #fff; resize: none; outline: 0; overflow: hidden; white-space: pre-wrap; font-size: 12px; line-height: 13px; color: #111; }
.under { display: flex; justify-content: space-between; margin-left: -3px; }
.under button { display: flex; align-items: center; gap: 5px; height: 24px; padding: 0 6px; color: #123; background: #fff; border: 1px solid #777; border-radius: 3px; }
.under button:first-child { padding-right: 24px; }

/* aero windows */
.win { position: absolute; border: 1px solid #1c2a38; border-radius: 6px; box-shadow: 0 0 10px 2px rgba(0, 0, 0, .65), inset 0 0 0 1px rgba(255, 255, 255, .75); }
.explorer { left: -12px; top: 73px; width: 769px; padding: 0 7px 7px; background: radial-gradient(160px 6px at 190px 8px, #9fadc966, transparent), radial-gradient(190px 6px at 400px 31px, #8a94a866, transparent), radial-gradient(10px 8px at 148px 30px, #4da1e0aa, transparent), radial-gradient(22px 12px at 43px 30px, #8ab1ee, transparent), radial-gradient(300px 6px at 320px 60px, #8fa0c4aa, transparent), linear-gradient(#dae5f6, #bdd0ef 22px, #d6e2f5 36px, #e1e9f5 62px, #b8cce2 90px, #4d84ba 180px, #d8e6f5 250px, #5d90c4 380px, #dce6f3 470px, #b8c8dc); }
.caps { display: flex; justify-content: flex-end; }
.caps button { display: flex; align-items: center; justify-content: center; width: 25px; height: 17px; border: 1px solid #6f7f95; border-width: 0 0 1px 1px; }
.caps button:first-child { border-radius: 0 0 0 4px; }
.caps .wide { width: 43px; border-right-width: 1px; border-radius: 0 0 4px 0; }
.addr-row { display: flex; align-items: center; gap: 3px; height: 44px; padding: 10px 1px 4px 0; margin-left: -1px; }
.addr { flex: 1; display: flex; align-items: center; gap: 8px; height: 22px; padding-left: 3px; background: #f2f6fccc; border: 1px solid #76869c; white-space: nowrap; color: #222; }
.addr .end { margin-left: auto; }
.refresh { display: flex; align-items: center; justify-content: center; width: 25px; height: 20px; border-left: 1px solid #76869c; }
.find { display: flex; align-items: center; width: 238px; height: 22px; margin-left: 3px; padding: 0 5px 0 4px; background: #f7fafdcc; border: 1px solid #76869c; font-size: 12px; font-style: italic; }
.find input { flex: 1; min-width: 0; }
.find input::placeholder { color: #555; opacity: 1; }
.ex-client { display: flex; border: 1px solid #4a5e78; background: #fcfcfc; }
.tasks { width: 168px; padding: 15px 0 0; color: #fff; background: radial-gradient(120px 200px at 10px 330px, #6bb0a055, transparent), linear-gradient(#4272a9, #3f7c94 35%, #3f877c 60%, #5aa965 85%, #63bb65); }
.tasks a { display: block; margin: 0 0 7px -1px; white-space: nowrap; }
.listing { flex: 1; min-width: 0; height: 528px; overflow: hidden; }
.cols { display: flex; height: 22px; background: linear-gradient(#fff 45%, #f4f5f7 46%); border-bottom: 1px solid #d5d5d5; }
.cols button { position: relative; width: 80px; padding-left: 6px; text-align: left; border-right: 1px solid #ddd; }
.cols .sorted { background: linear-gradient(#f2fafe, #d6eefa); border-color: #9ad4ee; }
.sorted svg { position: absolute; top: 1px; left: 37px; }
.row { display: grid; grid-template-columns: repeat(7, 80px); height: 98px; text-align: center; white-space: nowrap; }
.row.first { height: 29px; }
.item { display: flex; flex-direction: column; align-items: center; width: 74px; height: 70px; margin: 0 auto; padding-top: 1px; border: 1px solid transparent; border-radius: 3px; }
.item svg { margin-bottom: 4px; }
.picked { border-color: #d4d4d4; background: linear-gradient(#f7f7f7, #e4e4e4); }
.ex-bar { display: flex; flex-direction: column; align-items: center; width: 16px; padding: 7px 0 6px; background: #f1f1f1; }
.ex-bar .thumb { width: 15px; height: 327px; margin: auto 0 8px; }

.dialog { width: 414px; padding: 0 6px 6px; backdrop-filter: blur(3px); }
.dialog header { display: flex; align-items: center; gap: 6px; height: 27px; }
.dialog h2 { flex: 1; margin: 0; font-size: 12px; font-weight: normal; }
.close { display: flex; align-items: center; justify-content: center; align-self: flex-start; width: 42px; height: 17px; border: 1px solid #6f7f95; border-top: 0; border-radius: 0 0 4px 4px; }
.close.red { border-color: #5a1d1a; background: linear-gradient(#e8a79a, #d66b58 48%, #b8301c 50%, #d9694c); }
.client { padding: 5px 8px 7px 6px; border: 1px solid #53677f; background: #f0f0f0; }
.tabs { display: flex; align-items: flex-end; padding-left: 1px; height: 21px; }
.tabs button { height: 18px; padding: 0 4px; border: 1px solid #898c95; border-bottom: 0; background: linear-gradient(#f2f2f2, #ebebeb 50%, #dcdcdc 51%, #cfcfcf); white-space: nowrap; }
.tabs .on { position: relative; height: 22px; margin: 0 -1px -1px -1px; padding: 0 5px 2px; background: #fff; }
.sheet { border: 1px solid #898c95; background: #fff; }
.btn { display: flex; align-items: center; justify-content: center; gap: 4px; width: 73px; height: 22px; border: 1px solid #707070; border-radius: 3px; background: linear-gradient(#f3f3f3, #ebebeb 50%, #dddddd 51%, #cdcdcd); box-shadow: inset 0 0 0 1px #fcfcfc; }
.btn:disabled { border-color: #adb2b5; background: #f4f4f4; color: #838383; }
.btn.default { border-color: #3c7fb1; background: linear-gradient(#eaf6fd, #d9f0fc 50%, #bee6fd 51%, #a7d9f5); box-shadow: inset 0 0 0 1px #48c8f5; }
.zvok { left: 96px; top: 211px; background: linear-gradient(rgba(215, 232, 248, .55), rgba(215, 232, 248, .55) 40px, rgba(190, 220, 225, .4)); }
.zvok h2 { color: #444; }
.zvok .client { height: 425px; }
.zvok .tabs { padding-left: 0; }
.zvok .tabs .on { margin-left: 0; }
.zvok .sheet { height: 359px; padding: 6px 14px; }
.zvok p { margin: 0 0 1px; line-height: 14px; white-space: nowrap; }
.zvok .devices { height: 279px; margin-bottom: 12px; border: 1px solid #888; }
.spdif { left: 129px; top: 284px; background: linear-gradient(115deg, transparent 150px, #a9c2e466 151px, transparent 240px, #a9c2e455 300px, transparent 301px), linear-gradient(#dfebf9, #c6daf3 30px, #cfe3f7 100px, #a8d8f0 230px, #cadff5 350px, #8cc8ee); }
.spdif .sheet { height: 359px; padding: 12px 11px 0 14px; }
fieldset { height: 132px; min-width: 0; margin: 0 0 11px; padding: 4px 0 0 11px; border: 1px solid #dcdcdc; border-radius: 4px; }
legend { margin-left: -6px; padding: 0 3px; }
fieldset p { margin: 0 0 21px; white-space: nowrap; }
.pick { display: flex; gap: 12px; align-items: flex-start; }
.list { width: 238px; height: 64px; border: solid #898c95; border-width: 1px 0 0 1px; }
.list label { display: flex; align-items: center; gap: 5px; height: 14px; }
.list input { appearance: none; position: relative; width: 13px; height: 13px; border: 1px solid #8e8f8f; background: linear-gradient(135deg, #d4d8dc, #fff); box-shadow: inset 0 0 0 1px #f4f4f4; }
.list input:checked::after { content: ""; position: absolute; left: 4px; top: 1px; width: 4px; height: 7px; border: solid #3c4f96; border-width: 0 2px 2px 0; transform: rotate(40deg); }
.list + .btn { margin-top: 1px; }
footer { display: flex; justify-content: flex-end; gap: 8px; padding: 8px 0 0; margin-right: -1px; }
</style>
